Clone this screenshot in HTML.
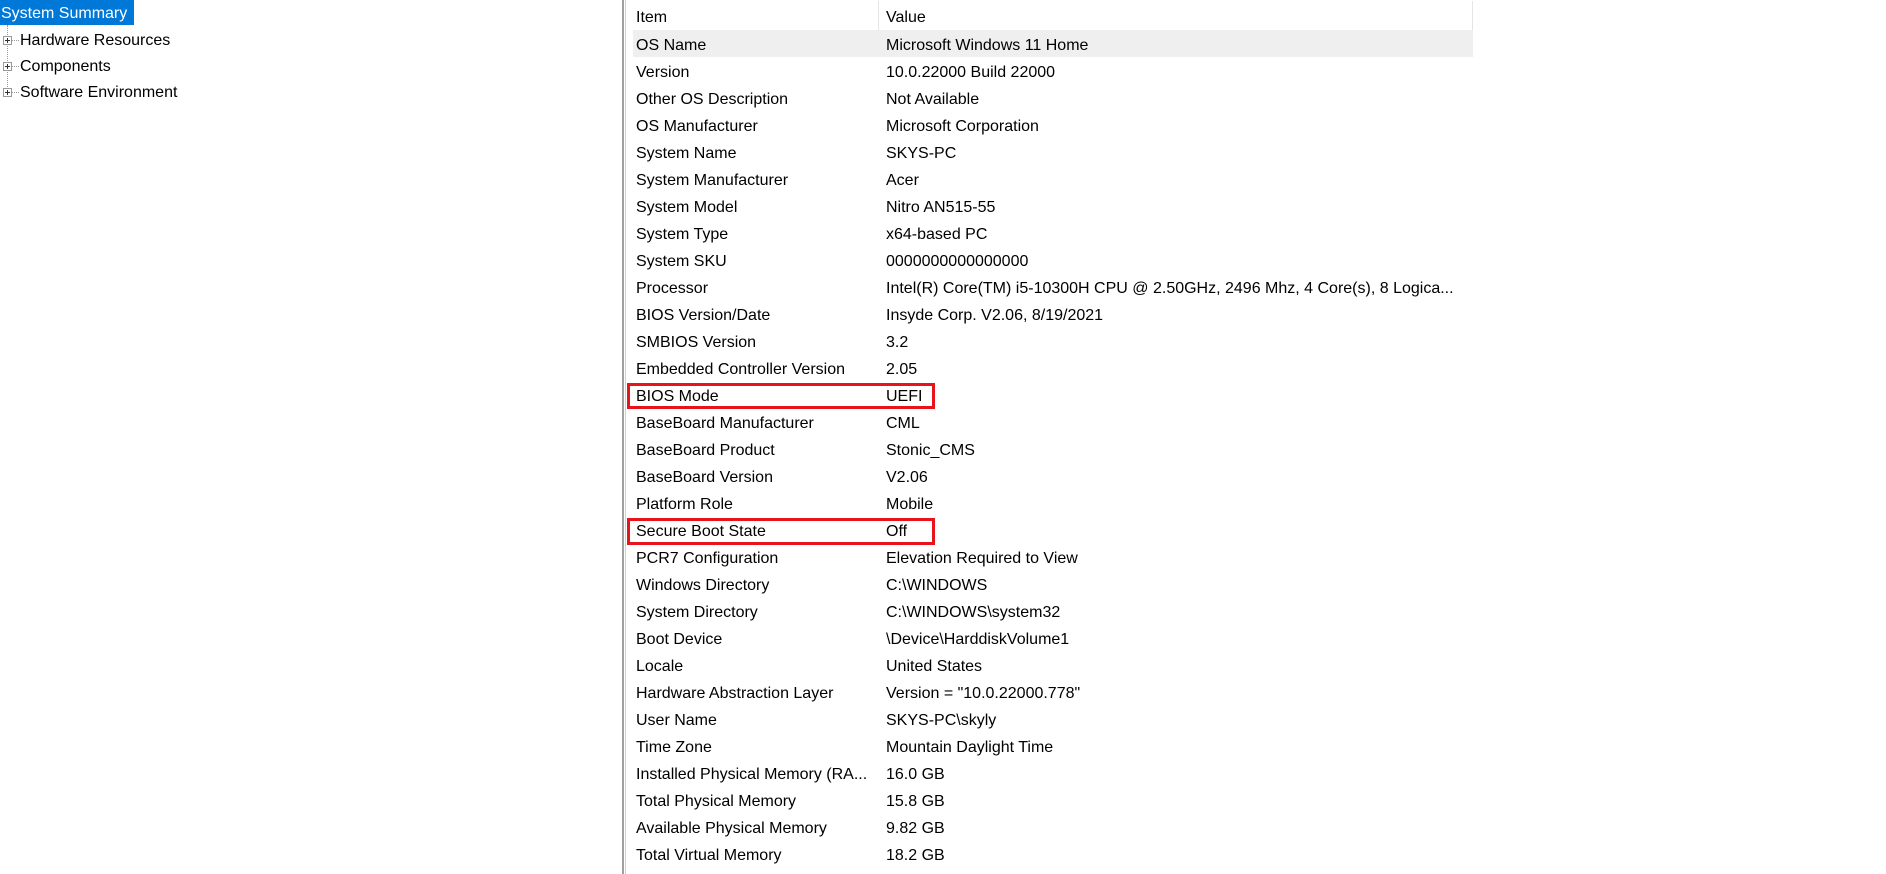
<!DOCTYPE html>
<html><head><meta charset="utf-8"><style>
html,body{margin:0;padding:0;background:#fff;width:1886px;height:874px;overflow:hidden;font-family:"Liberation Sans",sans-serif;font-size:16px;color:#000}
.t{position:absolute;white-space:nowrap;line-height:20px}
.sel{position:absolute;left:0;top:0;width:134px;height:25px;background:#0078d7}
.pb{position:absolute;left:3px;width:9px;height:9px;border:1px solid #999;box-sizing:border-box;background:#fff}
.pb:before{content:"";position:absolute;left:1px;top:3px;width:5px;height:1px;background:#333}
.pb:after{content:"";position:absolute;left:3px;top:1px;width:1px;height:5px;background:#333}
.box{position:absolute;border:3px solid #e8141b;box-sizing:border-box}
</style></head><body>
<div class="sel"></div>
<div class="t" style="left:1px;top:4px;color:#fff">System Summary</div>
<div style="position:absolute;left:7px;top:25px;height:70px;border-left:1px dotted #999"></div>
<div style="position:absolute;left:12px;top:40px;width:7px;border-top:1px dotted #999"></div>
<div style="position:absolute;left:12px;top:66px;width:7px;border-top:1px dotted #999"></div>
<div style="position:absolute;left:12px;top:92px;width:7px;border-top:1px dotted #999"></div>
<div class="pb" style="top:36px"></div>
<div class="pb" style="top:62px"></div>
<div class="pb" style="top:88px"></div>
<div class="t" style="left:20px;top:31px">Hardware Resources</div>
<div class="t" style="left:20px;top:57px">Components</div>
<div class="t" style="left:20px;top:83px">Software Environment</div>

<div style="position:absolute;left:622px;top:0;width:2px;height:874px;background:#a0a0a0"></div>
<div style="position:absolute;left:625px;top:0;width:1px;height:874px;background:#d0d0d0"></div>
<div style="position:absolute;left:878px;top:1px;width:1px;height:29px;background:#e5e5e5"></div>
<div style="position:absolute;left:1472px;top:1px;width:1px;height:29px;background:#e5e5e5"></div>
<div style="position:absolute;left:633px;top:30px;width:840px;height:27px;background:#efefef"></div>
<div class="t" style="left:636px;top:8px">Item</div>
<div class="t" style="left:886px;top:8px">Value</div>
<div id="rows"></div>
<div class="box" style="left:627px;top:383px;width:308px;height:26px"></div>
<div class="box" style="left:627px;top:518px;width:308px;height:27px"></div>
<script>
var d=[["OS Name","Microsoft Windows 11 Home"],["Version","10.0.22000 Build 22000"],["Other OS Description","Not Available"],["OS Manufacturer","Microsoft Corporation"],["System Name","SKYS-PC"],["System Manufacturer","Acer"],["System Model","Nitro AN515-55"],["System Type","x64-based PC"],["System SKU","0000000000000000"],["Processor","Intel(R) Core(TM) i5-10300H CPU @ 2.50GHz, 2496 Mhz, 4 Core(s), 8 Logica..."],["BIOS Version/Date","Insyde Corp. V2.06, 8/19/2021"],["SMBIOS Version","3.2"],["Embedded Controller Version","2.05"],["BIOS Mode","UEFI"],["BaseBoard Manufacturer","CML"],["BaseBoard Product","Stonic_CMS"],["BaseBoard Version","V2.06"],["Platform Role","Mobile"],["Secure Boot State","Off"],["PCR7 Configuration","Elevation Required to View"],["Windows Directory","C:\\WINDOWS"],["System Directory","C:\\WINDOWS\\system32"],["Boot Device","\\Device\\HarddiskVolume1"],["Locale","United States"],["Hardware Abstraction Layer","Version = \"10.0.22000.778\""],["User Name","SKYS-PC\\skyly"],["Time Zone","Mountain Daylight Time"],["Installed Physical Memory (RA...","16.0 GB"],["Total Physical Memory","15.8 GB"],["Available Physical Memory","9.82 GB"],["Total Virtual Memory","18.2 GB"]];
var h="";for(var i=0;i<d.length;i++){var y=36+27*i;
h+='<div class="t" style="left:636px;top:'+y+'px"></div><div class="t" style="left:886px;top:'+y+'px"></div>';}
var r=document.getElementById("rows");r.innerHTML=h;var c=r.children;
for(var i=0;i<d.length;i++){c[2*i].textContent=d[i][0];c[2*i+1].textContent=d[i][1];}
</script>
</body></html>
